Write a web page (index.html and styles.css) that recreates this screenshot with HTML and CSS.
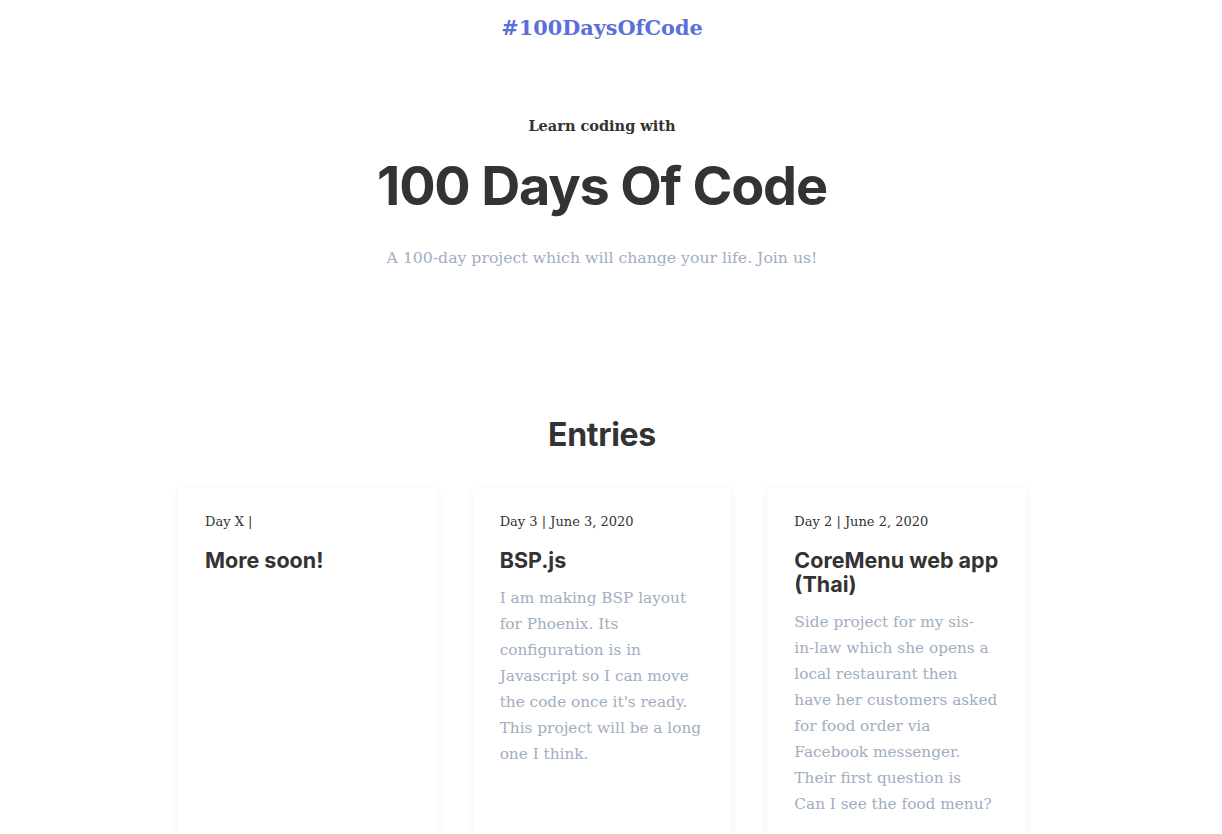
FILE: index.html
```html
<!DOCTYPE html>
<html lang="en">
<head>
<meta charset="utf-8">
<title>100 Days Of Code</title>
<link rel="stylesheet" href="styles.css">
</head>
<body>
  <header class="topbar">
    <a class="brand" href="#">#100DaysOfCode</a>
  </header>
  <section class="hero">
    <p class="hero-kicker">Learn coding with</p>
    <h1 class="hero-title">100 Days Of Code</h1>
    <p class="hero-sub">A 100-day project which will change your life. Join us!</p>
  </section>
  <section class="entries">
    <h2 class="entries-title">Entries</h2>
    <div class="grid">
      <article class="card">
        <p class="card-meta">Day X |</p>
        <h3 class="card-title">More soon!</h3>
      </article>
      <article class="card">
        <p class="card-meta">Day 3 | June 3, 2020</p>
        <h3 class="card-title">BSP.js</h3>
        <p class="card-text">I am making BSP layout<br>for Phoenix. Its<br>configuration is in<br>Javascript so I can move<br>the code once it's ready.<br>This project will be a long<br>one I think.</p>
      </article>
      <article class="card">
        <p class="card-meta">Day 2 | June 2, 2020</p>
        <h3 class="card-title">CoreMenu web app (Thai)</h3>
        <p class="card-text">Side project for my sis-<br>in-law which she opens a<br>local restaurant then<br>have her customers asked<br>for food order via<br>Facebook messenger.<br>Their first question is<br>Can I see the food menu?</p>
      </article>
    </div>
  </section>
</body>
</html>
```

FILE: styles.css
```css
* { box-sizing: border-box; }
html, body { margin: 0; padding: 0; background: #fff; }
body {
  font-family: "DejaVu Serif", "Liberation Serif", serif;
  color: #333;
  padding-right: 18px;
}
.topbar {
  display: flex;
  justify-content: center;
  padding-top: 14px;
  height: 60px;
}
.brand {
  font-weight: bold;
  font-size: 20.8px;
  color: #5a6fd8;
  text-decoration: none;
  line-height: 28px;
}
.hero {
  text-align: center;
  padding-top: 55px;
}
.hero-kicker {
  margin: 0;
  font-weight: bold;
  font-size: 14.5px;
  line-height: 22px;
  color: #333;
}
.hero-title {
  margin: 14px 0 0;
  font-family: "Inter", "Liberation Sans", sans-serif;
  font-weight: 700;
  font-size: 54px;
  line-height: 70px;
  letter-spacing: -1.2px;
  color: #333;
}
.hero-sub {
  margin: 23px 0 0;
  font-size: 15.7px;
  line-height: 28px;
  color: #a0aec0;
}
.entries {
  padding-top: 143px;
  text-align: center;
}
.entries-title {
  margin: 0;
  font-family: "Inter", "Liberation Sans", sans-serif;
  font-weight: 700;
  font-size: 32px;
  line-height: 40px;
  letter-spacing: -0.3px;
  color: #333;
}
.grid {
  margin: 33px auto 0;
  width: 848px;
  display: grid;
  grid-template-columns: repeat(3, 1fr);
  gap: 36px;
  text-align: left;
}
.card {
  background: #fff;
  min-height: 400px;
  padding: 25px 24px 24px 27px;
  box-shadow: 0 2px 8px rgba(0, 0, 0, 0.06);
}
.card-meta {
  margin: 0;
  font-size: 13px;
  line-height: 18px;
  color: #333;
}
.card-title {
  margin: 17px 0 0;
  font-family: "Inter", "Liberation Sans", sans-serif;
  font-weight: 650;
  font-size: 21.5px;
  line-height: 24px;
  color: #333;
}
.card-text {
  margin: 13px 0 0;
  font-size: 15.3px;
  line-height: 26px;
  color: #a0aec0;
}
```
